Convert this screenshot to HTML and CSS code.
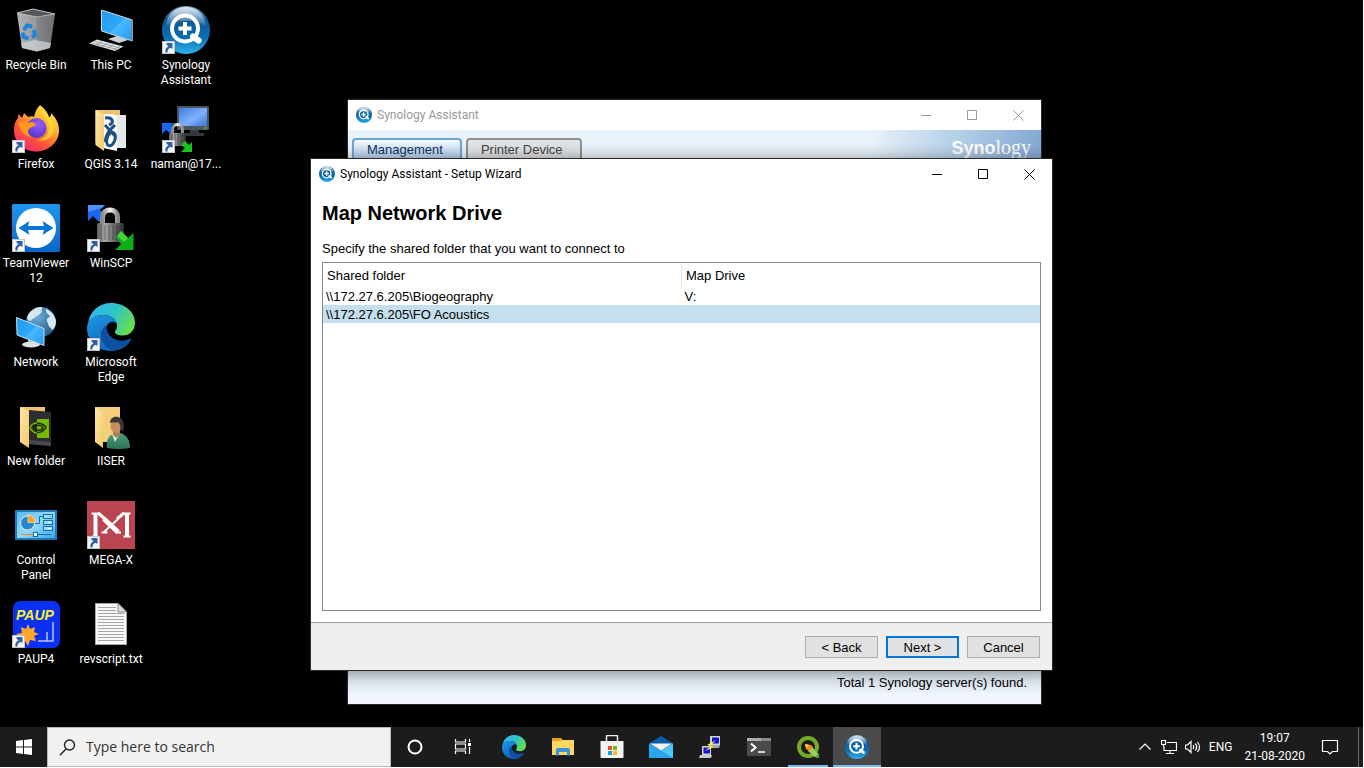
FILE: index.html
```html
<!DOCTYPE html>
<html lang="en">
<head>
<meta charset="utf-8">
<title>Desktop</title>
<link rel="stylesheet" href="styles.css">
</head>
<body>
<svg class="defs" width="0" height="0" aria-hidden="true">
  <defs>
    <linearGradient id="gBin" x1="0" x2="1" y1="0" y2="0"><stop offset="0" stop-color="#b2b4b5"/><stop offset=".5" stop-color="#95989a"/><stop offset="1" stop-color="#75787a"/></linearGradient>
    <linearGradient id="gScreen" x1="0" x2="1" y1="0" y2="1"><stop offset="0" stop-color="#1e9cf3"/><stop offset=".5" stop-color="#2fa8fa"/><stop offset=".52" stop-color="#4bb8ff"/><stop offset="1" stop-color="#1f9bf0"/></linearGradient>
    <linearGradient id="gSyn" x1="0" x2="0" y1="0" y2="1"><stop offset="0" stop-color="#7fa9c9"/><stop offset=".3" stop-color="#0f5a97"/><stop offset=".65" stop-color="#0a6db4"/><stop offset="1" stop-color="#2fb4ec"/></linearGradient>
    <linearGradient id="gGloss" x1="0" x2="0" y1="0" y2="1"><stop offset="0" stop-color="#fff" stop-opacity=".75"/><stop offset="1" stop-color="#fff" stop-opacity=".1"/></linearGradient>
    <linearGradient id="gFox" x1=".85" x2=".2" y1="0" y2="1"><stop offset="0" stop-color="#fff24a"/><stop offset=".35" stop-color="#ffb52c"/><stop offset=".65" stop-color="#ff5a33"/><stop offset="1" stop-color="#f0247a"/></linearGradient>
    <radialGradient id="gFoxIn" cx=".6" cy=".3" r=".8"><stop offset="0" stop-color="#9a5cff"/><stop offset="1" stop-color="#4a35c0"/></radialGradient>
    <linearGradient id="gFold" x1="0" x2="1" y1="0" y2="1"><stop offset="0" stop-color="#ffe9a8"/><stop offset="1" stop-color="#f2c866"/></linearGradient>
    <linearGradient id="gMon" x1="0" x2="1" y1="0" y2="1"><stop offset="0" stop-color="#3d7be0"/><stop offset=".55" stop-color="#7fb2ff"/><stop offset="1" stop-color="#3a72d8"/></linearGradient>
    <linearGradient id="gLock" x1="0" x2="1" y1="0" y2="0"><stop offset="0" stop-color="#5e5e5e"/><stop offset=".3" stop-color="#a8a8a8"/><stop offset=".6" stop-color="#6e6e6e"/><stop offset="1" stop-color="#2e2e2e"/></linearGradient>
    <linearGradient id="gShackle" x1="0" x2="1" y1="0" y2="0"><stop offset="0" stop-color="#8a8a8a"/><stop offset=".5" stop-color="#f4f4f4"/><stop offset="1" stop-color="#8a8a8a"/></linearGradient>
    <linearGradient id="gTv" x1="0" x2="0" y1="0" y2="1"><stop offset="0" stop-color="#1f97ee"/><stop offset="1" stop-color="#0866c8"/></linearGradient>
    <radialGradient id="gGlobe" cx=".35" cy=".3" r=".8"><stop offset="0" stop-color="#6fb0d8"/><stop offset="1" stop-color="#1b5680"/></radialGradient>
    <linearGradient id="gE1" x1="0" x2="1" y1=".2" y2=".6"><stop offset="0" stop-color="#35b7f1"/><stop offset=".5" stop-color="#2cc3c8"/><stop offset="1" stop-color="#6bdf4c"/></linearGradient>
    <linearGradient id="gE2" x1="0" x2=".6" y1="0" y2="1"><stop offset="0" stop-color="#1d9be6"/><stop offset="1" stop-color="#0f5fb8"/></linearGradient>
    <linearGradient id="gCp" x1="0" x2="1" y1="0" y2="1"><stop offset="0" stop-color="#5dbcf2"/><stop offset=".5" stop-color="#92d9fb"/><stop offset="1" stop-color="#3aa6ea"/></linearGradient>
    <linearGradient id="gBody" x1="0" x2="0" y1="0" y2="1"><stop offset="0" stop-color="#4d9a7b"/><stop offset="1" stop-color="#2d7457"/></linearGradient>

    <symbol id="shortcut" viewBox="0 0 13 13"><rect x=".5" y=".5" width="12" height="12" fill="#f6f6f6" stroke="#c4c4c4"/><path d="M3.500 11.500C2.800 8.500 4 6.500 6.500 5.500L4.500 3.500V2H10.500V8L8.500 6.800C6.500 7.500 5.300 9 5.500 11.500Z" fill="#2f5fa4"/></symbol>

    <symbol id="synology" viewBox="0 0 48 48">
      <circle cx="24" cy="24" r="24" fill="url(#gSyn)"/>
      <path d="M4 20C5 8 14 1 24 1S43 8 44 20C32 13 16 13 4 20Z" fill="url(#gGloss)"/>
      <circle cx="23" cy="22.500" r="13" fill="none" stroke="#fff" stroke-width="4"/>
      <path d="M31 30.500L36.500 34.500" stroke="#fff" stroke-width="6" stroke-linecap="round"/>
      <path d="M23 16v13M16.500 22.500h13" stroke="#fff" stroke-width="4"/>
    </symbol>

    <symbol id="edge" viewBox="0 0 48 48">
      <path d="M1 20C3 8 12 0 24 0C38 0 48 9 48 20C48 28 42 32.500 36 32.500C31 32.500 28 31 28 29C28 27.500 30 26.500 30 23C30 16 24 12 15.500 12C8.500 12 3 16 1 20Z" fill="url(#gE1)"/>
      <path d="M0 25C0 17 7 12 15.500 12C23 12 29 15.500 30 21C28 19 26 18.300 24 19C18 21 17 30 21 36C25 42 35 43 39 41C35 46 29 48 24 48C10 48 0 38 0 25Z" fill="url(#gE2)"/>
      <path d="M19.500 22C11 27 12 41 25 47.500C33 48 40 44 44 37C44 35.500 43 35 42 36C36 39 27 38 22.500 32C20 28.500 19 25 19.500 22Z" fill="#0d4fa0"/>
    </symbol>

    <symbol id="winscp" viewBox="0 0 48 48">
      <path d="M1 1H18L13 6L19 12L12 18L6 12L1 17Z" fill="#1768f5"/><path d="M1 1H18L15 4L1 8Z" fill="#4b90ff"/>
      <path d="M15.500 21V13C15.500 8 19 6 23 6S30.500 8 30.500 13V21" fill="none" stroke="url(#gShackle)" stroke-width="5"/>
      <rect x="10" y="19" width="27" height="19" rx="1.500" fill="url(#gLock)"/>
      <path d="M14 21v15M18 21v15M22 21v15M26 21v15M30 21v15M34 21v15" stroke="#2a2a2a" stroke-opacity=".5"/>
      <path d="M29 33L34 27L41 34L46.500 29V46H28L34 40Z" fill="#0fae18"/><path d="M34 27L41 34L37 38L30 32Z" fill="#43d13c"/>
    </symbol>
  </defs>
</svg>

<main class="desktop">
  <nav class="icons" aria-label="Desktop icons">
    <a class="item" href="#"><span class="pic"><svg viewBox="0 0 48 48">
      <path d="M5 7L21 3L43 8L38 42L25 45.500L10 42Z" fill="url(#gBin)"/>
      <path d="M5 7L21 3L43 8L25 11Z" fill="#55585a" stroke="#b9bcbe"/>
      <path d="M25 11L43 8L38 42L25 45.500Z" fill="#4a4d50" fill-opacity=".2"/>
      <path d="M9 37L23 34L39 37L38 42L25 45.500L10 42Z" fill="#d0d3d4" fill-opacity=".75"/>
      <g fill="none" stroke="#1c84dc" stroke-width="4"><path d="M12 24L15 19.500L20 20.500"/><path d="M22 24L23 29L20 31.500"/><path d="M16.500 32.500L11.500 31L10.500 26.500"/></g>
    </svg></span><span class="name">Recycle Bin</span></a>

    <a class="item" href="#"><span class="pic"><svg viewBox="0 0 48 48">
      <path d="M21 33L30 30L41 34L32 37Z" fill="#c9d2d9"/>
      <path d="M14.500 4L45.500 14V35L14.500 25Z" fill="url(#gScreen)" stroke="#c8dbe8"/>
      <path d="M45 14v21" stroke="#6f8797" stroke-width="1.500"/>
      <path d="M2 37.500L10 33.500L36.500 40.500L28 45Z" fill="#dfe3e6"/>
      <path d="M5 37L30 43.500M8 35.500L33 42M8 39.500l7-4M14 41l7-4M20 42.500l7-4M26 44l7-4" stroke="#7b8288" stroke-width=".6"/>
    </svg></span><span class="name">This PC</span></a>

    <a class="item" href="#"><span class="pic"><svg><use href="#synology"/></svg><svg class="arrow"><use href="#shortcut"/></svg></span><span class="name">Synology<br>Assistant</span></a>

    <a class="item" href="#"><span class="pic"><svg viewBox="0 0 48 48">
      <path d="M28 0C33 4 36 8 37 12C39 12 39 10 39 8C44 13 47.500 19 47 27C46 38 36 46.500 24 46.500C11 46.500 2 37 2 25C2 20 3 16 6 13L6.500 9L10 13L12 8L16 12C18 11 21 11 22 12C23 7 25 3 28 0Z" fill="url(#gFox)"/>
      <circle cx="24.500" cy="23" r="10" fill="url(#gFoxIn)"/>
      <path d="M6 18C10 16 14 18 17 18C20 16 23 17 24 20C22 22 18 22 17 24C15 26 16 30 20 32C14 32 9 28 8 22Z" fill="#ff9a1f"/>
      <path d="M30 4C32 13 37 14 37 23C37 30 31 35 24 35C34 38 42 32 42 23C42 15 35 11 30 4Z" fill="#ffe23c" fill-opacity=".65"/>
    </svg><svg class="arrow"><use href="#shortcut"/></svg></span><span class="name">Firefox</span></a>

    <a class="item" href="#"><span class="pic"><svg viewBox="0 0 48 48">
      <path d="M8.500 5H33V42H16L8.500 38Z" fill="#eec56a"/>
      <path d="M25 10H39V43H25Z" fill="#e6e9ec"/><path d="M16 9H26L30 12V46L16 43Z" fill="#fff"/>
      <g fill="none" stroke="#1e5184" stroke-width="3"><path d="M18 13C26 12 28 18 22 20M18 20L28 31M28 20C24 24 19 28 18 37"/><ellipse cx="24" cy="34" rx="4" ry="7" transform="rotate(18 24 34)"/></g>
      <path d="M8.500 5L17 9V46L8.500 40Z" fill="url(#gFold)"/>
    </svg></span><span class="name">QGIS 3.14</span></a>

    <a class="item" href="#"><span class="pic"><svg viewBox="0 0 48 48">
      <path d="M28 24h9v4h5v3H22v-3h6z" fill="#31383e"/>
      <rect x="15" y="1" width="32" height="24" rx="1" fill="#4c565e"/><rect x="17" y="3" width="28" height="18" fill="url(#gMon)"/><path d="M42 23h3" stroke="#6ae04c"/>
      <path d="M0 18H12L9 21L13 25L9 29L4 25L0 29Z" fill="#1768f5"/>
      <path d="M10.500 29V24C10.500 18 20.500 18 20.500 24V29" fill="none" stroke="url(#gShackle)" stroke-width="3"/>
      <rect x="7" y="28" width="17" height="13" rx="1" fill="url(#gLock)"/><path d="M10 29v11M13 29v11M16 29v11M19 29v11" stroke="#222" stroke-opacity=".5"/>
      <path d="M19 40L23 36L27 40L30 37V47H19L23 43Z" fill="#18c321"/>
    </svg><svg class="arrow"><use href="#shortcut"/></svg></span><span class="name">naman@17...</span></a>

    <a class="item" href="#"><span class="pic"><svg viewBox="0 0 48 48">
      <rect width="48" height="48" rx="1.500" fill="url(#gTv)"/><circle cx="24" cy="24" r="20" fill="#fff"/>
      <path d="M6.500 24L17.500 17L16 22H32L30.500 17L41.500 24L30.500 31L32 26H16L17.500 31Z" fill="#0b74d4"/>
    </svg><svg class="arrow"><use href="#shortcut"/></svg></span><span class="name">TeamViewer<br>12</span></a>

    <a class="item" href="#"><span class="pic"><svg><use href="#winscp"/></svg><svg class="arrow"><use href="#shortcut"/></svg></span><span class="name">WinSCP</span></a>
    <span></span>

    <a class="item" href="#"><span class="pic"><svg viewBox="0 0 48 48">
      <circle cx="29" cy="19" r="15" fill="url(#gGlobe)"/>
      <path d="M15 15C17 8 23 4 29 4C32 5 28 7 30 9C28 10 27 13 24 13C23 16 20 15 19 18C17 18 16 17 15 15ZM34 6C39 8 43 12 44 18C44 23 42 26 40 27C39 24 36 24 36 20C34 18 35 14 38 14C37 11 33 10 34 6Z" fill="#d5e8ef"/>
      <path d="M16 37h6v4h-6z" fill="#a9b5bd"/><ellipse cx="19" cy="41.500" rx="9" ry="3" fill="#dce2e6"/>
      <path d="M4.500 14.500L32 25.500V42.500L5 32Z" fill="url(#gScreen)" stroke="#c8dbe8"/>
    </svg></span><span class="name">Network</span></a>

    <a class="item" href="#"><span class="pic"><svg><use href="#edge"/></svg><svg class="arrow"><use href="#shortcut"/></svg></span><span class="name">Microsoft<br>Edge</span></a>
    <span></span>

    <a class="item" href="#"><span class="pic"><svg viewBox="0 0 48 48">
      <path d="M8 5H33V42H16L8 38Z" fill="#eec56a"/>
      <path d="M17 8L39 10V44L17 42Z" fill="#2b2d30"/><path d="M17 38L39 40V44L17 42Z" fill="#45484c"/>
      <rect x="25" y="17" width="12" height="19" fill="#76b900"/>
      <path d="M18 26C21 21 28 19 34 25C31 31 24 33 18 26ZM22 26C24 22 30 23 31 26C29 29 24 29 23 26.500" fill="none" stroke="#1c2611" stroke-width="1.500"/><path d="M18 26C19 23 22 21 25 21M18 26C20 29 22 31 25 31" fill="none" stroke="#76b900" stroke-width="1.500"/>
      <path d="M8 5L17 9V46L8 40Z" fill="url(#gFold)"/>
    </svg></span><span class="name">New folder</span></a>

    <a class="item" href="#"><span class="pic"><svg viewBox="0 0 48 48">
      <path d="M8 5H33V40H16L8 38Z" fill="#f3cf7c"/><path d="M8 5L16 9V46L8 40Z" fill="url(#gFold)"/>
      <path d="M20 46C19 39 21 34 26 32L34 31C40 34 43 38 43 46Q31 48 20 46Z" fill="url(#gBody)"/>
      <path d="M25 32L28 40L33 31Z" fill="#e9eef0"/><path d="M26 27h7v6l-4 3-3-3z" fill="#b07d52"/>
      <ellipse cx="29" cy="24" rx="5.500" ry="7" fill="#c48e5f"/>
      <path d="M23 21C23 16 27 14 31 15C37 16 38 23 36 29L33 28C34 24 33 22 31 20C28 21 25 20 23 21Z" fill="#3a3632"/>
    </svg></span><span class="name">IISER</span></a>
    <span></span>

    <a class="item" href="#"><span class="pic"><svg viewBox="0 0 48 48">
      <rect x="3" y="9" width="42" height="30" fill="#1a78bb"/><rect x="5" y="11" width="38" height="26" fill="url(#gCp)"/>
      <circle cx="15.500" cy="22" r="7" fill="#2b86cd" stroke="#d6f0ff"/><path d="M16 21.500V14A7.500 7.500 0 0 1 23.500 21.500Z" fill="#f7a823" stroke="#fff2cf" stroke-width=".6"/>
      <path d="M23 22.500h4.500V15.500H31" fill="none" stroke="#1170b5"/>
      <g fill="#9bdcfb" stroke="#1170b5"><rect x="31.500" y="13.500" width="9" height="4"/><rect x="31.500" y="19.500" width="9" height="4"/><rect x="31.500" y="25.500" width="9" height="4"/></g>
      <path d="M37 15.500h2" stroke="#f08a1c"/><path d="M36 21.500h3M36 27.500h3" stroke="#fff"/>
      <path d="M9 33.500h14" stroke="#f08a1c"/><path d="M23 33.500h16" stroke="#1170b5"/><rect x="21.500" y="31.500" width="4" height="4" fill="#fff" stroke="#1170b5"/>
    </svg></span><span class="name">Control<br>Panel</span></a>

    <a class="item" href="#"><span class="pic"><svg viewBox="0 0 48 48">
      <rect width="48" height="48" fill="#b94551"/>
      <path d="M4.500 12.500H13M35 12.500H43.500M5 35.500H11M36.500 35.500H43.500" stroke="#fff" stroke-width="2"/>
      <path d="M8.500 12V35M40 12V35" stroke="#fff" stroke-width="4"/>
      <path d="M11 12L18 18M37 12L30 18" stroke="#fff" stroke-width="3"/>
      <path d="M17 18L31 31" stroke="#fff" stroke-width="5"/><path d="M31 18L17 31M14.500 31.500h6M28 31.500h6" stroke="#fff" stroke-width="2"/>
    </svg><svg class="arrow"><use href="#shortcut"/></svg></span><span class="name">MEGA-X</span></a>
    <span></span>

    <a class="item" href="#"><span class="pic"><svg viewBox="0 0 48 48">
      <rect x="1" y="1" width="47" height="47" rx="7" fill="#0a30f5"/>
      <text x="4" y="20" class="paup">PAUP</text>
      <path d="M16 24l2 5 5-2-1 5 5 2-5 2 2 5-6-1-2 6-3-5-6 2 2-6-5-3 6-1-1-6 5 2z" fill="#ffa726"/>
      <path d="M41 22V41H26M35 32V41" fill="none" stroke="#b9c5f5" stroke-width="1.500"/>
    </svg><svg class="arrow"><use href="#shortcut"/></svg></span><span class="name">PAUP4</span></a>

    <a class="item" href="#"><span class="pic"><svg viewBox="0 0 48 48">
      <path d="M8.500 3.500H31L39.500 12V44.500H8.500Z" fill="#f8f8f8" stroke="#a9a9a9"/><path d="M31 3.500V12H39.500Z" fill="#ddd" stroke="#8f8f8f"/>
      <path d="M11 7.500h18M11 10.500h18M11 13.500h26M11 16.500h26M11 19.500h26M11 22.500h26M11 25.500h26M11 28.500h26M11 31.500h26M11 34.500h26M11 37.500h26M11 40.500h26" stroke="#a3a6a9"/>
    </svg></span><span class="name">revscript.txt</span></a>
  </nav>

  <section class="window window-back" aria-label="Synology Assistant">
    <header class="titlebar">
      <svg class="app-icon"><use href="#synology"/></svg><span class="title">Synology Assistant</span>
      <button class="ctl" aria-label="Minimize"><svg viewBox="0 0 11 11"><path d="M0 5.500h10"/></svg></button>
      <button class="ctl" aria-label="Maximize"><svg viewBox="0 0 11 11"><path d="M.5.500h9v9h-9z"/></svg></button>
      <button class="ctl" aria-label="Close"><svg viewBox="0 0 11 11"><path d="M.5.500l10 10M10.500.500l-10 10"/></svg></button>
    </header>
    <div class="banner">
      <button class="tab tab-on">Management</button><button class="tab">Printer Device</button>
      <span class="brand"><b>Syno</b><i>logy</i></span>
    </div>
    <footer class="status">Total 1 Synology server(s) found.</footer>
  </section>

  <section class="window window-front" aria-label="Setup Wizard">
    <header class="titlebar">
      <svg class="app-icon"><use href="#synology"/></svg><span class="title">Synology Assistant - Setup Wizard</span>
      <button class="ctl" aria-label="Minimize"><svg viewBox="0 0 11 11"><path d="M0 5.500h10"/></svg></button>
      <button class="ctl" aria-label="Maximize"><svg viewBox="0 0 11 11"><path d="M.5.500h9v9h-9z"/></svg></button>
      <button class="ctl" aria-label="Close"><svg viewBox="0 0 11 11"><path d="M.5.500l10 10M10.500.500l-10 10"/></svg></button>
    </header>
    <div class="wizard">
      <h1>Map Network Drive</h1>
      <p>Specify the shared folder that you want to connect to</p>
      <div class="list">
        <table>
          <thead><tr><th scope="col">Shared folder</th><th scope="col">Map Drive</th></tr></thead>
          <tbody>
            <tr><td>\\172.27.6.205\Biogeography</td><td>V:</td></tr>
            <tr class="selected"><td>\\172.27.6.205\FO Acoustics</td><td></td></tr>
          </tbody>
        </table>
      </div>
    </div>
    <footer class="actions">
      <button>&lt; Back</button><button class="default">Next &gt;</button><button>Cancel</button>
    </footer>
  </section>
</main>

<footer class="taskbar">
  <button class="start" aria-label="Start"><svg viewBox="0 0 16 16" width="16" height="16" fill="#fff"><path d="M0 2L7 1V7.500H0ZM8 1L16 0V7.500H8ZM0 8.500H7V15L0 14ZM8 8.500H16V16L8 15Z"/></svg></button>
  <label class="search">
    <svg viewBox="0 0 17 17" width="17" height="17" fill="none" stroke="#222" stroke-width="1.400"><circle cx="10.500" cy="6" r="5"/><path d="M7 10L.8 16.200"/></svg>
    <input type="text" placeholder="Type here to search" aria-label="Search">
  </label>
  <div class="system">
    <button class="task" aria-label="Cortana"><svg viewBox="0 0 24 24"><circle cx="12" cy="12" r="6.500" fill="none" stroke="#fff" stroke-width="2"/></svg></button>
    <button class="task" aria-label="Task View"><svg viewBox="0 0 24 24" fill="none" stroke="#fff" stroke-width="1.200"><path d="M4.500 4v3h10V4M4.500 19v-3h10v3M4.500 9h10v5h-10zM18.500 4v3M18.500 12v7"/><path d="M17 8h3v3h-3z" fill="#fff" stroke="none"/></svg></button>
  </div>
  <div class="pinned">
    <button class="task" aria-label="Edge"><svg><use href="#edge"/></svg></button>
    <button class="task" aria-label="File Explorer"><svg viewBox="0 0 24 24"><path d="M1 3h9l1.500 2H23v15H1z" fill="#ffd767"/><path d="M1 3h9l1 3H1z" fill="#e8a317"/><path d="M5 20.500V15q0-2 2-2H17q2 0 2 2v5.500h-3V17H8v3.500z" fill="#3b93d8"/></svg></button>
    <button class="task" aria-label="Store"><svg viewBox="0 0 24 24"><path d="M6.500 7V1.500Q6.500.500 7.500.500h9q1 0 1 1V7" fill="none" stroke="#eee" stroke-width="1.500"/><path d="M.5 6h23v16q0 1-1 1h-21q-1 0-1-1z" fill="#f3f3f3"/><path d="M8 11h4v4H8z" fill="#f04e23"/><path d="M13 11h4v4h-4z" fill="#7db900"/><path d="M8 16h4v4H8z" fill="#0aa3ee"/><path d="M13 16h4v4h-4z" fill="#fdb813"/></svg></button>
    <button class="task" aria-label="Mail"><svg viewBox="0 0 24 24"><path d="M0 8.500L12 1L24 8.500V12H0z" fill="#0a5cab"/><path d="M0 8.500L12 15.500L24 8.500V23H0z" fill="#28a8ea"/><path d="M12 15.500L24 8.500V23z" fill="#4fc5f7"/><path d="M1 8.500H23L12 15.500z" fill="#f2f2f2"/></svg></button>
    <button class="task" aria-label="PuTTY"><svg viewBox="0 0 24 24"><path d="M12 1h10v9H12z" fill="#d4d4d4"/><path d="M14 2.500h7v6h-7z" fill="#1515d5"/><path d="M11 10h11l-1 3H10z" fill="#a9a9a9"/><path d="M4 11h9v9H4z" fill="#d4d4d4"/><path d="M5.500 12.500H12v6H5.500z" fill="#1515d5"/><path d="M2 20h12l-1 3H1z" fill="#c9c9c9"/><path d="M18 5L9 10l4 1-6 5 9-4-4-1z" fill="#fff22a"/></svg></button>
    <button class="task" aria-label="Terminal"><svg viewBox="0 0 24 24"><path d="M0 3h24v18H0z" fill="#4a4a4a"/><path d="M0 3h24v3H0z" fill="#8a8a8a"/><path d="M0 3h14v3H0z" fill="#b0b0b0"/><path d="M4 8.500l4.500 4L4 16.500" fill="none" stroke="#fff" stroke-width="2"/><path d="M11 17h7" stroke="#fff" stroke-width="1.500"/></svg></button>
    <button class="task open" aria-label="QGIS"><svg viewBox="0 0 24 24"><circle cx="12" cy="12" r="9" fill="none" stroke="#77ab27" stroke-width="4"/><path d="M13 15l3-3 7 7v4h-3z" fill="#5a9f35"/><path d="M12 12l4 0 6 7-3 3-7-6z" fill="#9acd62"/><path d="M9 9l6 1 2 2-4 4-3-2z" fill="#f2862a"/><path d="M9 9l4 1-3 3z" fill="#ffd84a"/></svg></button>
    <button class="task active" aria-label="Synology Assistant"><svg><use href="#synology"/></svg></button>
  </div>
  <div class="tray">
    <button aria-label="Show hidden icons"><svg viewBox="0 0 16 16"><path d="M2.500 10.500L8 5l5.500 5.500"/></svg></button>
    <button aria-label="Network"><svg viewBox="0 0 16 16"><path d="M6 3.500h9.500v8H3V7.500M9 11.500v3M5 14.500h8M.500 1.500h4v4h-4zM2.500 5.500v2"/></svg></button>
    <button aria-label="Volume"><svg viewBox="0 0 16 16"><path d="M.5 6h2L6 2.500v11L2.500 10h-2zM8 6q1.500 2 0 4M10.200 4.500q3 3.500 0 7M12.500 3q4 5 0 10"/></svg></button>
    <button class="lang">ENG</button>
    <button class="clock"><span>19:07</span><span>21-08-2020</span></button>
    <button class="notes" aria-label="Notifications"><svg viewBox="0 0 18 18"><path d="M1.500 2.500h15v11h-5l-2.500 2.500-2.500-2.500h-5z"/></svg></button>
  </div>
</footer>
</body>
</html>
```
FILE: styles.css
```css
* { box-sizing: border-box; }

body {
  margin: 0;
  height: 100vh;
  padding: 0 1px 1px 0;
  display: flex;
  flex-direction: column;
  background: #fff;
  font-family: "Liberation Sans", sans-serif;
  font-size: 13px;
  overflow: hidden;
}

button {
  border: 0;
  padding: 0;
  background: none;
  font: inherit;
  color: inherit;
}

.defs { position: absolute; }

/* Desktop */
.desktop {
  position: relative;
  flex: 1;
  min-height: 0;
  background: #000;
}

.icons {
  display: grid;
  grid-template-columns: repeat(3, 72px);
  grid-auto-rows: 99px;
  column-gap: 3px;
  padding-top: 6px;
  width: max-content;
}

.item {
  display: flex;
  flex-direction: column;
  align-items: center;
  gap: 4px;
  color: #fff;
  text-decoration: none;
  font: 12px/15px Roboto, sans-serif;
  text-align: center;
  white-space: nowrap;
}

.pic { position: relative; width: 48px; height: 48px; }
.pic svg { display: block; width: 48px; height: 48px; }
.pic .arrow { position: absolute; left: 0; bottom: 0; width: 13px; height: 13px; }
.paup { font: italic bold 14px "Liberation Sans", sans-serif; fill: #f7f22a; }

/* Windows */
.window {
  position: absolute;
  display: flex;
  flex-direction: column;
  border: 1px solid #2a2a2a;
  background: #fff;
}
.window-back { inset: 99px 321px 22px 347px; }
.window-front { inset: 158px 310px 56px 310px; box-shadow: 0 2px 16px rgba(0, 0, 0, .45); }

.titlebar {
  display: flex;
  align-items: center;
  height: 30px;
  flex: none;
  padding-left: 8px;
  font: 12px/16px Roboto, sans-serif;
  color: #000;
}
.window-back .titlebar { color: #999; }
.app-icon { width: 16px; height: 16px; margin-right: 5px; }
.title { flex: 1; }
.ctl { width: 46px; height: 30px; display: grid; place-items: center; }
.ctl svg { width: 11px; height: 11px; fill: none; stroke: currentColor; }

.banner {
  display: flex;
  align-items: flex-start;
  gap: 4px;
  height: 40px;
  padding: 8px 10px 0 4px;
  background: linear-gradient(90deg, #eaf3fa 0 75%, #b4cfe8 88%, #84a9d4);
}
.tab {
  height: 32px;
  padding: 0 17px 10px 13px;
  border: 2px solid #8f9192;
  border-radius: 4px 4px 0 0;
  background: linear-gradient(#e3e6e8, #d6d9db);
  color: #444;
}
.tab-on {
  border-color: #6ea6d0;
  background: linear-gradient(#f5faff, #b9d3f0 60%);
  color: #0b3263;
}
.brand {
  margin-left: auto;
  color: #fff;
  line-height: 18px;
}
.brand b { font-size: 18px; }
.brand i { font: 20px/18px "Liberation Serif", serif; }

.status {
  margin-top: auto;
  height: 60px;
  padding: 31px 14px 0;
  text-align: right;
  line-height: 16px;
  background: linear-gradient(#dfe8f1, #e8eff8 80%, #f0f5fd 81%);
}

.wizard {
  flex: 1;
  min-height: 0;
  display: flex;
  flex-direction: column;
  padding: 12px 11px 11px;
}
h1 { margin: 0 0 16px; font-size: 20px; line-height: 24px; }
p { margin: 0 0 5px; line-height: 16px; }
.list { flex: 1; border: 1px solid #828790; }

table { width: 100%; border-collapse: collapse; table-layout: fixed; }
th { height: 24px; padding: 0 4px; text-align: left; font-weight: normal; }
th + th { border-left: 1px solid #e3e3e3; }
td { height: 18px; padding: 0 3px; }
.selected { background: #c4dfed; }

.actions {
  display: flex;
  justify-content: flex-end;
  gap: 8px;
  padding: 13px 12px 12px;
  background: #efefef;
  border-top: 1px solid #a0a0a0;
}
.actions button {
  width: 73px;
  height: 22px;
  background: #e1e1e1;
  border: 1px solid #adadad;
}
.actions .default { border: 2px solid #0078d7; }

/* Taskbar */
.taskbar {
  display: flex;
  height: 40px;
  flex: none;
  background: #1c1c1c;
  color: #fff;
}
.start { width: 47px; display: grid; place-items: center; }
.search {
  display: flex;
  align-items: center;
  gap: 10px;
  width: 344px;
  padding-left: 11px;
  background: #f1f1f1;
  border: 1px solid #b8b8b8;
}
.search input {
  flex: 1;
  border: 0;
  padding: 0;
  outline: 0;
  background: none;
  font: 14px/20px "Open Sans", sans-serif;
}
.search input::placeholder { color: #333; opacity: 1; }

.system { display: flex; }
.pinned { display: flex; gap: 1px; margin-left: 3px; }
.task { width: 48px; height: 40px; display: grid; place-items: center; }
.task svg { width: 24px; height: 24px; }
.open { background: linear-gradient(#76b9ed, #76b9ed) center bottom / 40px 2px no-repeat; }
.active { background: linear-gradient(#76b9ed, #76b9ed) center bottom / 48px 2px no-repeat #4a4a4a; }

.tray {
  display: flex;
  align-items: center;
  gap: 8px;
  margin-left: auto;
  margin-right: 4px;
  padding-right: 19px;
  border-right: 1px solid #6a6a6a;
  font: 12px/18px Roboto, sans-serif;
}
.tray svg { display: block; width: 16px; height: 16px; fill: none; stroke: #fff; stroke-width: 1.2; }
.clock { display: flex; flex-direction: column; align-items: center; margin: 0 8px 0 4px; }
.notes svg { width: 18px; height: 18px; }
```
